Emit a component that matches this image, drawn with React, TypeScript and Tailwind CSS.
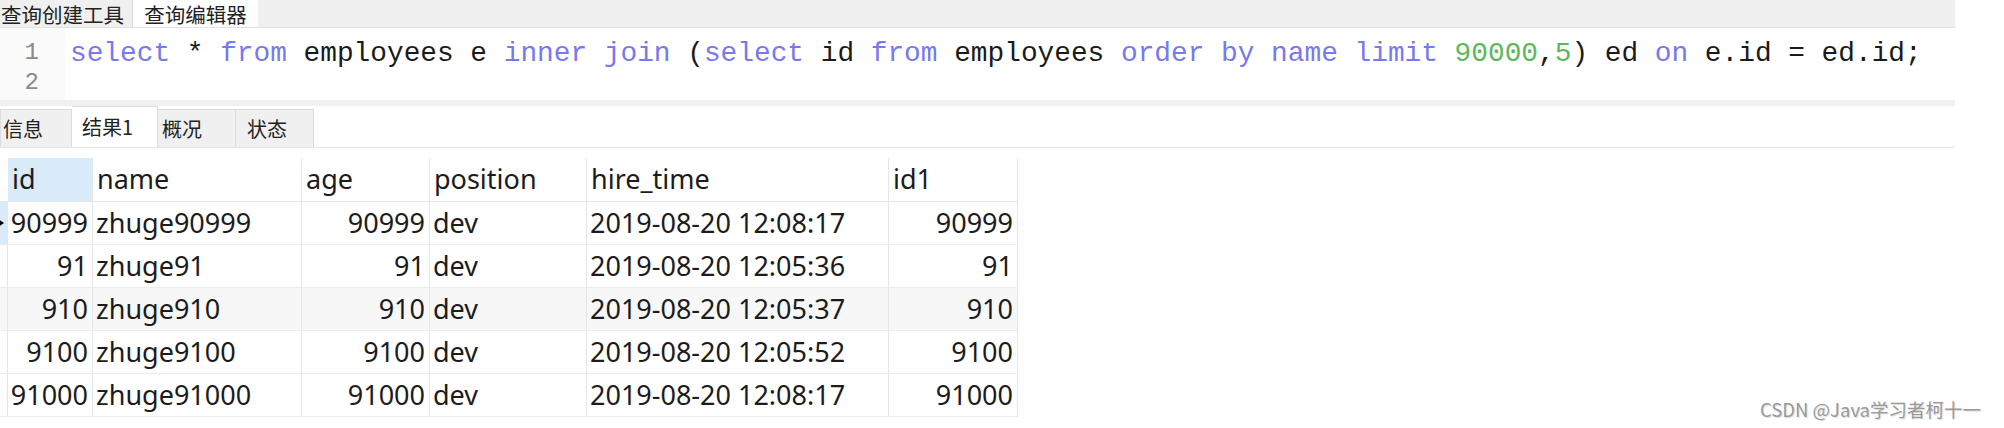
import React from "react";

const KW = "text-[#7878f0]";
const NUM = "text-[#5cb85c]";

const cols = "grid grid-cols-[8px_85px_209px_128px_157px_302px_129px]";

const rows = [
  ["90999", "zhuge90999", "90999", "dev", "2019-08-20 12:08:17", "90999"],
  ["91", "zhuge91", "91", "dev", "2019-08-20 12:05:36", "91"],
  ["910", "zhuge910", "910", "dev", "2019-08-20 12:05:37", "910"],
  ["9100", "zhuge9100", "9100", "dev", "2019-08-20 12:05:52", "9100"],
  ["91000", "zhuge91000", "91000", "dev", "2019-08-20 12:08:17", "91000"],
];

const cjk = "[font-family:'Noto_Sans_CJK_SC','Noto_Sans',sans-serif]";

export default function App() {
  return (
    <div className="w-[2004px] h-[428px] bg-white overflow-hidden relative">
      <div className="w-[1955px]">
        {/* top tabs */}
        <div className={`h-[28px] bg-[#f0f0f0] flex items-end border-b border-[#e2e2e2] ${cjk} text-[20.5px] text-[#222]`}>
          <div className="w-[133px] h-[27px] flex items-center pl-[1px] leading-[22px] border-r border-[#dadada]">查询创建工具</div>
          <div className="w-[125px] h-[27px] bg-white flex items-center justify-center leading-[22px]">查询编辑器</div>
        </div>
        {/* editor */}
        <div className="h-[78px] flex bg-white border-b-[6px] border-[#f0f0f0] [font-family:'Liberation_Mono',monospace]">
          <div className="w-[65px] bg-[#fafafa] pt-[10px] text-[24px] leading-[30px] text-[#8a8a8a] pr-[26px] text-right">
            <div>1</div>
            <div>2</div>
          </div>
          <div className="pl-[5px] pt-[11px] text-[27.8px] leading-[30px] text-[#1a1a1a] whitespace-pre">
            <div>
              <span className={KW}>select</span> * <span className={KW}>from</span> employees e <span className={KW}>inner join</span> (<span className={KW}>select</span> id <span className={KW}>from</span> employees <span className={KW}>order by name limit</span> <span className={NUM}>90000</span>,<span className={NUM}>5</span>) ed <span className={KW}>on</span> e.id = ed.id;
            </div>
            <div>&nbsp;</div>
          </div>
        </div>
        {/* result tabs */}
        <div className={`h-[42px] flex items-end border-b border-[#e4e4e4] ${cjk} text-[20px] text-[#222]`}>
          <div className="w-[72px] h-[38px] bg-[#f0f0f0] border border-b-0 border-[#dcdcdc] flex items-center pl-[2px] leading-[24px]">信息</div>
          <div className="w-[86px] h-[41px] bg-white border-t border-r border-[#dcdcdc] flex items-center pl-[10px] leading-[24px]">结果1</div>
          <div className="w-[78px] h-[38px] bg-[#f0f0f0] border-t border-r border-[#dcdcdc] flex items-center pl-[4px] leading-[24px]">概况</div>
          <div className="w-[78px] h-[38px] bg-[#f0f0f0] border-t border-r border-[#dcdcdc] flex items-center pl-[11px] leading-[24px]">状态</div>
        </div>
      </div>
      {/* grid */}
      <div className="mt-[10px] w-[1018px] [font-family:'Noto_Sans','Open_Sans',sans-serif] text-[27px] text-[#1c1c1c]">
        <div className={`${cols} h-[44px] border-b border-[#e6e6e6]`}>
          <div className="bg-white" />
          <div className="bg-[#d9eaf8] flex items-center pl-[4px] border-r border-[#e6e6e6]">id</div>
          <div className="flex items-center pl-[4px] border-r border-[#e6e6e6]">name</div>
          <div className="flex items-center pl-[4px] border-r border-[#e6e6e6]">age</div>
          <div className="flex items-center pl-[4px] border-r border-[#e6e6e6]">position</div>
          <div className="flex items-center pl-[4px] border-r border-[#e6e6e6]">hire_time</div>
          <div className="flex items-center pl-[4px] border-r border-[#e6e6e6]">id1</div>
        </div>
        {rows.map((r, i) => (
          <div
            key={i}
            className={`${cols} h-[43px] border-b border-[#ececec] ${i === 2 ? "bg-[#f7f7f7]" : "bg-white"}`}
          >
            <div className={`relative border-r border-[#e6e6e6] ${i === 0 ? "bg-[#d9eaf8]" : ""}`}>
              {i === 0 && (
                <div className="absolute left-[-3px] top-[16px] w-0 h-0 border-y-[5px] border-y-transparent border-l-[7px] border-l-black" />
              )}
            </div>
            <div className="flex items-center justify-end pr-[4px] border-r border-[#e6e6e6]">{r[0]}</div>
            <div className="flex items-center pl-[3px] border-r border-[#e6e6e6]">{r[1]}</div>
            <div className="flex items-center justify-end pr-[4px] border-r border-[#e6e6e6]">{r[2]}</div>
            <div className="flex items-center pl-[3px] border-r border-[#e6e6e6]">{r[3]}</div>
            <div className="flex items-center pl-[3px] border-r border-[#e6e6e6]">{r[4]}</div>
            <div className="flex items-center justify-end pr-[4px] border-r border-[#e6e6e6]">{r[5]}</div>
          </div>
        ))}
      </div>
      <div className={`absolute left-[1760px] top-[398px] text-[18.5px] leading-[22px] text-[#9a9a9a] ${cjk} [text-shadow:1px_1px_1px_rgba(0,0,0,0.15)]`}>
        CSDN @Java学习者柯十一
      </div>
    </div>
  );
}
